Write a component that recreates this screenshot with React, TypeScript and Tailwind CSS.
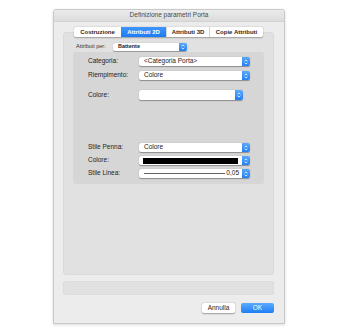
const font = { fontFamily: '"Liberation Sans", Arial, sans-serif' }

function Stepper() {
  return (
    <div className="flex h-full w-[8px] shrink-0 items-center justify-center rounded-r-[2px] bg-gradient-to-b from-[#5aa8fb] to-[#1f7ff4]">
      <svg width="4" height="6" viewBox="0 0 4 6" fill="none">
        <path d="M0.6 2.3 L2 0.9 L3.4 2.3 M0.6 3.7 L2 5.1 L3.4 3.7" stroke="white" strokeWidth="0.8" />
      </svg>
    </div>
  )
}

function Popup({
  width,
  height = 9,
  children,
}: {
  width: number
  height?: number
  children?: React.ReactNode
}) {
  return (
    <div
      className="flex items-stretch rounded-[2px] bg-white shadow-[0_0.5px_1px_rgba(0,0,0,0.35)]"
      style={{ width, height }}
    >
      <div className="flex min-w-0 grow items-center overflow-hidden pl-[5px] pr-[3px] text-[6.5px] leading-none text-[#222]">
        {children}
      </div>
      <Stepper />
    </div>
  )
}

function Row({
  label,
  mt,
  children,
}: {
  label: string
  mt: string
  children: React.ReactNode
}) {
  return (
    <div className={`flex items-center ${mt}`}>
      <span className="w-[51px] shrink-0 text-[6.5px] leading-none text-[#222]">{label}</span>
      {children}
    </div>
  )
}

const tabs = ["Costruzione", "Attributi 2D", "Attributi 3D", "Copie Attributi"]
const tabWidths = [47, 45, 43, 54]

export default function App() {
  return (
    <div className="h-[333px] w-[340px] bg-white pl-[53px] pt-[9px]" style={font}>
      <div className="flex h-[315px] w-[232px] flex-col overflow-hidden rounded-t-[3px] border border-[#c9c9c9] bg-[#ececec] shadow-[0_1px_3px_rgba(0,0,0,0.15)]">
        {/* title bar */}
        <div className="flex h-[12px] shrink-0 items-center justify-center border-b border-[#d2d2d2] bg-gradient-to-b from-[#ebebeb] to-[#dcdcdc] text-[6.5px] leading-none text-[#4a4a4a]">
          Definizione parametri Porta
        </div>

        <div className="flex grow flex-col pl-[9px] pr-[10px] pt-[5px]">
          {/* tabs */}
          <div className="relative z-10 flex h-[10px] justify-center">
            <div className="flex overflow-hidden rounded-[2px] bg-white shadow-[0_0.5px_1.5px_rgba(0,0,0,0.3)]">
              {tabs.map((tab, i) => (
                <div
                  key={tab}
                  className={`flex items-center justify-center text-[6px] font-bold leading-none ${
                    i === 1
                      ? "bg-gradient-to-b from-[#3f95fa] to-[#1b7cf4] text-white"
                      : "text-[#2a2a2a]"
                  } ${i > 1 ? "border-l border-[#d4d4d4]" : ""}`}
                  style={{ width: tabWidths[i] }}
                >
                  {tab}
                </div>
              ))}
            </div>
          </div>

          {/* tab panel */}
          <div className="-mt-[5px] flex h-[243px] flex-col rounded-[3px] border border-[#dadada] bg-[#e1e1e1] px-[9px] pt-[10px]">
            <div className="flex items-center pl-[3px]">
              <span className="w-[37px] shrink-0 text-[5.5px] leading-none text-[#333]">Attributi per:</span>
              <Popup width={74} height={8}>
                <span className="text-[5.5px] font-bold">Battente</span>
              </Popup>
            </div>

            <div className="mt-[1px] flex h-[132px] flex-col rounded-[3px] bg-[#d6d6d6] pl-[15px] pt-[5px]">
              <Row label="Categoria:" mt="">
                <Popup width={111}>&lt;Categoria Porta&gt;</Popup>
              </Row>
              <Row label="Riempimento:" mt="mt-[5px]">
                <Popup width={111}>Colore</Popup>
              </Row>
              <Row label="Colore:" mt="mt-[10px]">
                <Popup width={104} height={10} />
              </Row>
              <Row label="Stile Penna:" mt="mt-[43px]">
                <Popup width={111}>Colore</Popup>
              </Row>
              <Row label="Colore:" mt="mt-[4px]">
                <Popup width={111}>
                  <div className="-ml-[1px] h-[6px] w-full bg-black" />
                </Popup>
              </Row>
              <Row label="Stile Linea:" mt="mt-[4px]">
                <Popup width={111}>
                  <div className="h-[1px] grow bg-[#666]" />
                  <span className="ml-[1px] text-[6.5px]">0,05</span>
                </Popup>
              </Row>
            </div>
          </div>

          {/* status box */}
          <div className="mt-[6px] h-[14px] rounded-[2px] border border-[#dcdcdc] bg-[#e1e1e1]" />

          {/* buttons */}
          <div className="mt-[8px] flex justify-end gap-[6px]">
            <div className="flex h-[10px] w-[33px] items-center justify-center rounded-[2px] bg-white text-[6.5px] leading-none text-[#222] shadow-[0_0.5px_1.5px_rgba(0,0,0,0.35)]">
              Annulla
            </div>
            <div className="flex h-[10px] w-[33px] items-center justify-center rounded-[2px] bg-gradient-to-b from-[#5aa9fc] to-[#1c7ef5] text-[6.5px] leading-none text-white">
              OK
            </div>
          </div>
        </div>
      </div>
    </div>
  )
}
